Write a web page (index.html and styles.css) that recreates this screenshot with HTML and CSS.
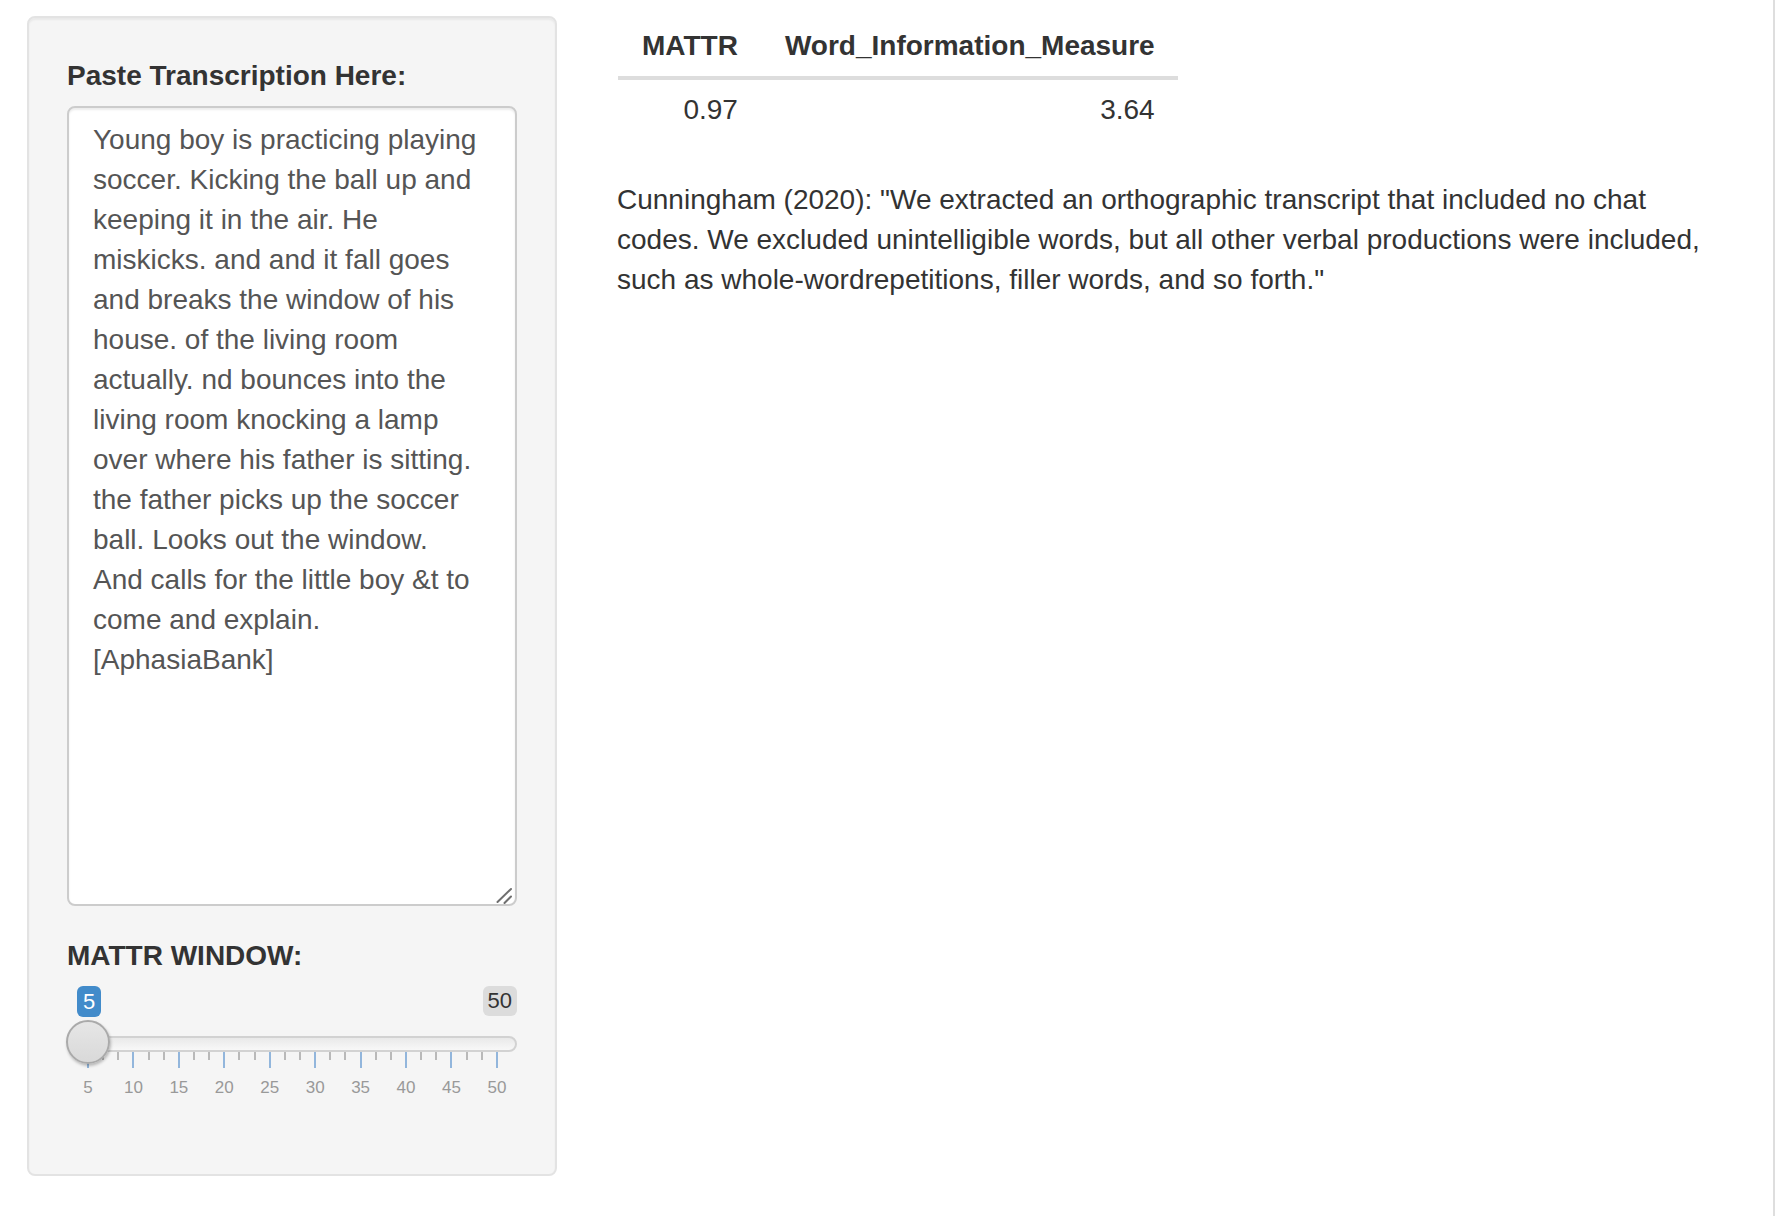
FILE: index.html
```html
<!DOCTYPE html>
<html lang="en">
<head>
<meta charset="utf-8">
<title>MATTR</title>
<link rel="stylesheet" href="styles.css">
</head>
<body>
<div class="app">
  <aside class="sidebar">
    <div class="well">
      <div class="form-group">
        <label class="control-label" for="transcript">Paste Transcription Here:</label>
        <div class="ta-wrap">
          <textarea id="transcript" class="form-control">Young boy is practicing playing soccer. Kicking the ball up and keeping it in the air. He miskicks. and and it fall goes and breaks the window of his house. of the living room actually. nd bounces into the living room knocking a lamp over where his father is sitting. the father picks up the soccer ball. Looks out the window. And calls for the little boy &amp;t to come and explain. [AphasiaBank]</textarea>
          <svg class="grip" width="20" height="20" viewBox="0 0 20 20" aria-hidden="true">
            <line x1="1.5" y1="17" x2="15" y2="4" />
            <line x1="8.5" y1="18" x2="15" y2="11.5" />
          </svg>
        </div>
      </div>
      <div class="form-group">
        <label class="control-label">MATTR WINDOW:</label>
        <div class="irs">
          <div class="irs-badges">
            <span class="irs-single">5</span>
            <span class="irs-max">50</span>
          </div>
          <div class="irs-line">
            <span class="irs-handle"></span>
          </div>
          <div class="irs-ticks">
            <i class="pol"></i><i class="pol small"></i><i class="pol small"></i>
            <i class="pol"></i><i class="pol small"></i><i class="pol small"></i>
            <i class="pol"></i><i class="pol small"></i><i class="pol small"></i>
            <i class="pol"></i><i class="pol small"></i><i class="pol small"></i>
            <i class="pol"></i><i class="pol small"></i><i class="pol small"></i>
            <i class="pol"></i><i class="pol small"></i><i class="pol small"></i>
            <i class="pol"></i><i class="pol small"></i><i class="pol small"></i>
            <i class="pol"></i><i class="pol small"></i><i class="pol small"></i>
            <i class="pol"></i><i class="pol small"></i><i class="pol small"></i>
            <i class="pol"></i>
          </div>
          <div class="irs-labels">
            <span>5</span><span>10</span><span>15</span><span>20</span><span>25</span>
            <span>30</span><span>35</span><span>40</span><span>45</span><span>50</span>
          </div>
        </div>
      </div>
    </div>
  </aside>
  <main class="main">
    <table class="table">
      <thead>
        <tr><th>MATTR</th><th>Word_Information_Measure</th></tr>
      </thead>
      <tbody>
        <tr><td>0.97</td><td>3.64</td></tr>
      </tbody>
    </table>
    <p class="note">Cunningham (2020): "We extracted an orthographic transcript that included no chat codes. We excluded unintelligible words, but all other verbal productions were included, such as whole-wordrepetitions, filler words, and so forth."</p>
  </main>
</div>
</body>
</html>
```
FILE: styles.css
```css
* { box-sizing: border-box; }

html, body {
  margin: 0;
  padding: 0;
  background: #fff;
}

body {
  font-family: "Liberation Sans", Arial, Helvetica, sans-serif;
  font-size: 28px;
  line-height: 40px;
  color: #333;
}

.app {
  display: flex;
  gap: 60px;
  width: 1775px;
  min-height: 100vh;
  padding: 16px 56px 0 27px;
  border-right: 2px solid #dedede;
}

.sidebar {
  flex: 0 0 530px;
}

.well {
  background: #f5f5f5;
  border: 2px solid #e3e3e3;
  border-radius: 8px;
  box-shadow: inset 0 2px 2px rgba(0, 0, 0, 0.05);
  padding: 38px;
}

.form-group {
  margin-bottom: 30px;
}

.control-label {
  display: block;
  font-weight: bold;
  margin-bottom: 10px;
  color: #333;
}

.ta-wrap {
  position: relative;
}

.form-control {
  display: block;
  width: 100%;
  height: 800px;
  padding: 12px 32px 12px 24px;
  font-family: "Liberation Sans", Arial, Helvetica, sans-serif;
  font-size: 28px;
  line-height: 40px;
  color: #555;
  background: #fff;
  border: 2px solid #ccc;
  border-radius: 8px;
  box-shadow: inset 0 2px 2px rgba(0, 0, 0, 0.075);
  resize: none;
  overflow: hidden;
  margin: 0;
}

.grip {
  position: absolute;
  right: 1px;
  bottom: 1px;
  pointer-events: none;
}

.grip line {
  stroke: #6f6f6f;
  stroke-width: 2;
  stroke-linecap: round;
}

/* slider */
.irs {
  height: 120px;
}

.irs-badges {
  display: flex;
  justify-content: space-between;
  align-items: flex-start;
  height: 31px;
  padding-left: 10px;
}

.irs-single,
.irs-max {
  font-size: 22px;
  line-height: 27px;
  padding: 2px 5px;
  border-radius: 6px;
}

.irs-single {
  background: #428bca;
  color: #fff;
  padding: 2px 6px;
}

.irs-max {
  background: #dcdcdc;
  color: #333;
  line-height: 26px;
}

.irs-line {
  position: relative;
  margin-top: 19px;
  height: 16px;
  border: 2px solid #d2d2d2;
  border-radius: 16px;
  background: linear-gradient(to bottom, #e2e2e2 -50%, #ffffff 150%);
}

.irs-handle {
  position: absolute;
  left: -3px;
  top: -18px;
  width: 44px;
  height: 44px;
  border: 2px solid #aaa;
  border-radius: 50%;
  background: linear-gradient(to bottom, #e6e6e6 0%, #d9d9d9 100%);
  box-shadow: 1px 2px 3px rgba(0, 0, 0, 0.25);
  z-index: 2;
}

.irs-ticks {
  display: flex;
  justify-content: space-between;
  align-items: flex-start;
  height: 16px;
  margin: 0 19px 0 20px;
}

.pol {
  display: block;
  width: 2px;
  height: 16px;
  background: #92b6dc;
}

.pol.small {
  height: 8px;
  background: #b9b9b9;
}

.irs-labels {
  display: flex;
  justify-content: space-between;
  margin: 10px 5px 0 6px;
  font-size: 17px;
  line-height: 20px;
  color: #999;
}

.irs-labels span {
  width: 30px;
  text-align: center;
}

/* main */
.main {
  flex: 1;
  min-width: 0;
}

.table {
  border-collapse: collapse;
  margin: 0 0 40px 1px;
}

.table th,
.table td {
  padding: 10px 23px 10px 24px;
  text-align: right;
  line-height: 40px;
  color: #333;
}

.table th {
  font-weight: bold;
  border-bottom: 4px solid #ddd;
}

.note {
  margin: 0;
  color: #333;
}
```
